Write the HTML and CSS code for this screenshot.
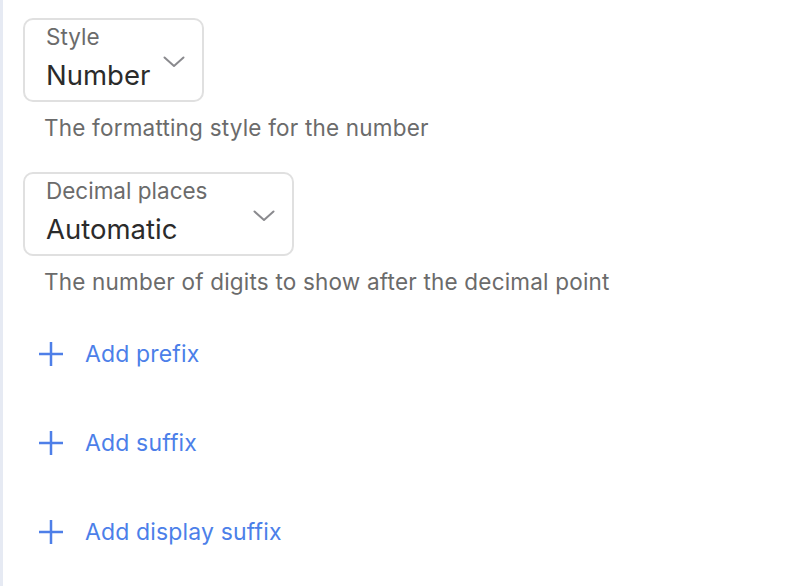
FILE: index.html
```html
<!DOCTYPE html>
<html lang="en">
<head>
  <meta charset="UTF-8" />
  <meta name="viewport" content="width=device-width, initial-scale=1.0"/>
  <title>Number format</title>
  <link rel="stylesheet" href="styles.css">
</head>
<body>

<div class="panel">
  <!-- style select -->
  <div class="field">
    <div class="select select-style">
      <div class="select-text">
        <span class="select-label">Style</span>
        <span class="select-value">Number</span>
      </div>
      <svg class="chevron" width="22" height="12" viewBox="0 0 22 12">
        <path d="M1.5 1.5 L11 10 L20.5 1.5" fill="none" stroke="#8a8a8e" stroke-width="2" stroke-linecap="round" stroke-linejoin="round"/>
      </svg>
    </div>
    <div class="helper">The formatting style for the number</div>
  </div>

  <!-- decimal places select -->
  <div class="field">
    <div class="select select-decimal">
      <div class="select-text">
        <span class="select-label">Decimal places</span>
        <span class="select-value">Automatic</span>
      </div>
      <svg class="chevron" width="22" height="12" viewBox="0 0 22 12">
        <path d="M1.5 1.5 L11 10 L20.5 1.5" fill="none" stroke="#8a8a8e" stroke-width="2" stroke-linecap="round" stroke-linejoin="round"/>
      </svg>
    </div>
    <div class="helper">The number of digits to show after the decimal point</div>
  </div>

  <!-- add buttons -->
  <div class="actions">
    <button class="add-btn">
      <svg width="26" height="26" viewBox="0 0 26 26"><path d="M13 1 V25 M1 13 H25" stroke="#4e7fe8" stroke-width="2.5"/></svg>
      <span>Add prefix</span>
    </button>
    <button class="add-btn">
      <svg width="26" height="26" viewBox="0 0 26 26"><path d="M13 1 V25 M1 13 H25" stroke="#4e7fe8" stroke-width="2.5"/></svg>
      <span>Add suffix</span>
    </button>
    <button class="add-btn">
      <svg width="26" height="26" viewBox="0 0 26 26"><path d="M13 1 V25 M1 13 H25" stroke="#4e7fe8" stroke-width="2.5"/></svg>
      <span>Add display suffix</span>
    </button>
  </div>
</div>

</body>
</html>
```

FILE: styles.css
```css
* {
  margin: 0;
  padding: 0;
  box-sizing: border-box;
  font-family: Inter, "Noto Sans", sans-serif;
}
body {
  background: #fff;
  color: #333;
  min-height: 100vh;
}

/* panel with the thin left rule */
.panel {
  min-height: 100vh;
  border-left: 3px solid #e6eaf3;
  padding: 18px 0 0 20px;
}

.field {
  margin-bottom: 31px;
}

/* select box */
.select {
  display: flex;
  align-items: center;
  justify-content: space-between;
  height: 84px;
  border: 2px solid #e0e0e0;
  border-radius: 10px;
  padding: 0 17px 0 21px;
}
.select-style { width: 181px; }
.select-decimal { width: 271px; }

.select-text {
  display: flex;
  flex-direction: column;
  align-self: flex-start;
  padding-top: 3px;
}
.select-label {
  font-size: 22.5px;
  line-height: 27px;
  color: #6b6b6b;
}
.select-value {
  margin-top: 9px;
  font-size: 27.5px;
  line-height: 33px;
  color: #2b2b2b;
}
.chevron {
  margin-top: 4px;
}

.helper {
  margin: 12px 0 0 21px;
  font-size: 22.5px;
  line-height: 27px;
  letter-spacing: 0.2px;
  color: #6b6b6b;
}

/* add buttons */
.actions {
  display: flex;
  flex-direction: column;
  gap: 61px;
  padding-top: 14px;
}
.add-btn {
  display: flex;
  align-items: center;
  gap: 21px;
  height: 28px;
  border: none;
  background: none;
  padding-left: 15px;
  font-size: 23px;
  letter-spacing: 0.15px;
  color: #4c7fe9;
  cursor: pointer;
  text-align: left;
}
```
